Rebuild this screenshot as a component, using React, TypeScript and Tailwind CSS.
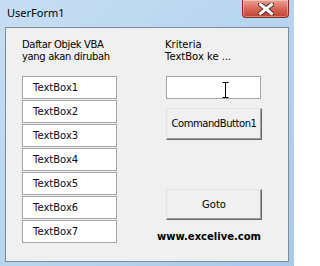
const boxes = ["TextBox1", "TextBox2", "TextBox3", "TextBox4", "TextBox5", "TextBox6", "TextBox7"];

const tahoma = { fontFamily: "'DejaVu Sans', Verdana, sans-serif" };

function CloseButton() {
  return (
    <div className="ml-auto mr-[5px] flex h-[18px] w-[47px] items-center justify-center rounded-b-[4px] border border-t-0 border-[#8b2b20] bg-gradient-to-b from-[#e9a193] via-[#d8685a] to-[#c2402f] shadow-[inset_0_0_0_1px_rgba(255,255,255,0.35)]">
      <svg width="16" height="12" viewBox="0 0 16 12">
        <path d="M2 1 L14 11 M14 1 L2 11" stroke="#4a2a26" strokeWidth="5" strokeLinecap="square" />
        <path d="M2.5 1.5 L13.5 10.5 M13.5 1.5 L2.5 10.5" stroke="#ffffff" strokeWidth="3" strokeLinecap="square" />
      </svg>
    </div>
  );
}

function Button({ label, h, track }: { label: string; h: string; track?: string }) {
  return (
    <div
      className={`flex ${h} w-[96px] items-center justify-center border border-t-[#e3e3e3] border-l-[#e3e3e3] border-b-[#696969] border-r-[#696969] bg-[#f0f0f0] text-[10px] text-black shadow-[inset_-1px_-1px_0_#a0a0a0] ${track ?? ""}`}
      style={tahoma}
    >
      {label}
    </div>
  );
}

export default function App() {
  return (
    <div className="flex h-[266px] w-[294px] flex-col overflow-hidden bg-gradient-to-br from-[#c6def3] via-[#b7d5ef] to-[#a8cbea]">
      <div className="flex h-[27px] items-start">
        <span
          className="ml-[7px] mt-[5px] text-[11px] leading-[15px] text-black"
          style={{ fontFamily: "'Noto Sans', 'Open Sans', sans-serif" }}
        >
          UserForm1
        </span>
        <CloseButton />
      </div>

      <div
        className="ml-[5px] grid h-[235px] w-[284px] grid-cols-[95px_96px] gap-x-[49px] border border-[#7d8a99] bg-[#f0f0f0] pl-[16px] pt-[10px] text-[10px] leading-[12px] text-black"
        style={tahoma}
      >
        <div className="flex flex-col">
          <div className="mt-[1px] whitespace-nowrap tracking-[-0.35px]">
            <div>Daftar Objek VBA</div>
            <div>yang akan dirubah</div>
          </div>
          <div className="mt-[13px] flex flex-col gap-[1px]">
            {boxes.map((b) => (
              <div key={b} className="h-[23px] border border-[#a5a5a5] bg-white pl-[10px] leading-[21px] text-[#0a0a1e]">
                {b}
              </div>
            ))}
          </div>
        </div>

        <div className="flex flex-col">
          <div className="ml-[-1px] mt-[1px] whitespace-nowrap">
            <div>Kriteria</div>
            <div>TextBox ke ...</div>
          </div>
          <div className="relative mt-[13px] h-[23px] w-[95px] border border-[#a5a5a5] bg-white">
            <svg className="absolute left-[55px] top-[5px]" width="7" height="16" viewBox="0 0 7 16">
              <path d="M0.5 0.5 H6.5 M3.5 0.5 V15.5 M0.5 15.5 H6.5" stroke="#000" strokeWidth="1" fill="none" />
            </svg>
          </div>
          <div className="mt-[9px]">
            <Button label="CommandButton1" h="h-[32px]" track="tracking-[-0.45px]" />
          </div>
          <div className="mt-[49px]">
            <Button label="Goto" h="h-[31px]" />
          </div>
          <div className="ml-[-9px] mt-[11px] w-[104px] whitespace-nowrap text-center font-bold leading-[12px]">
            www.excelive.com
          </div>
        </div>
      </div>
    </div>
  );
}
